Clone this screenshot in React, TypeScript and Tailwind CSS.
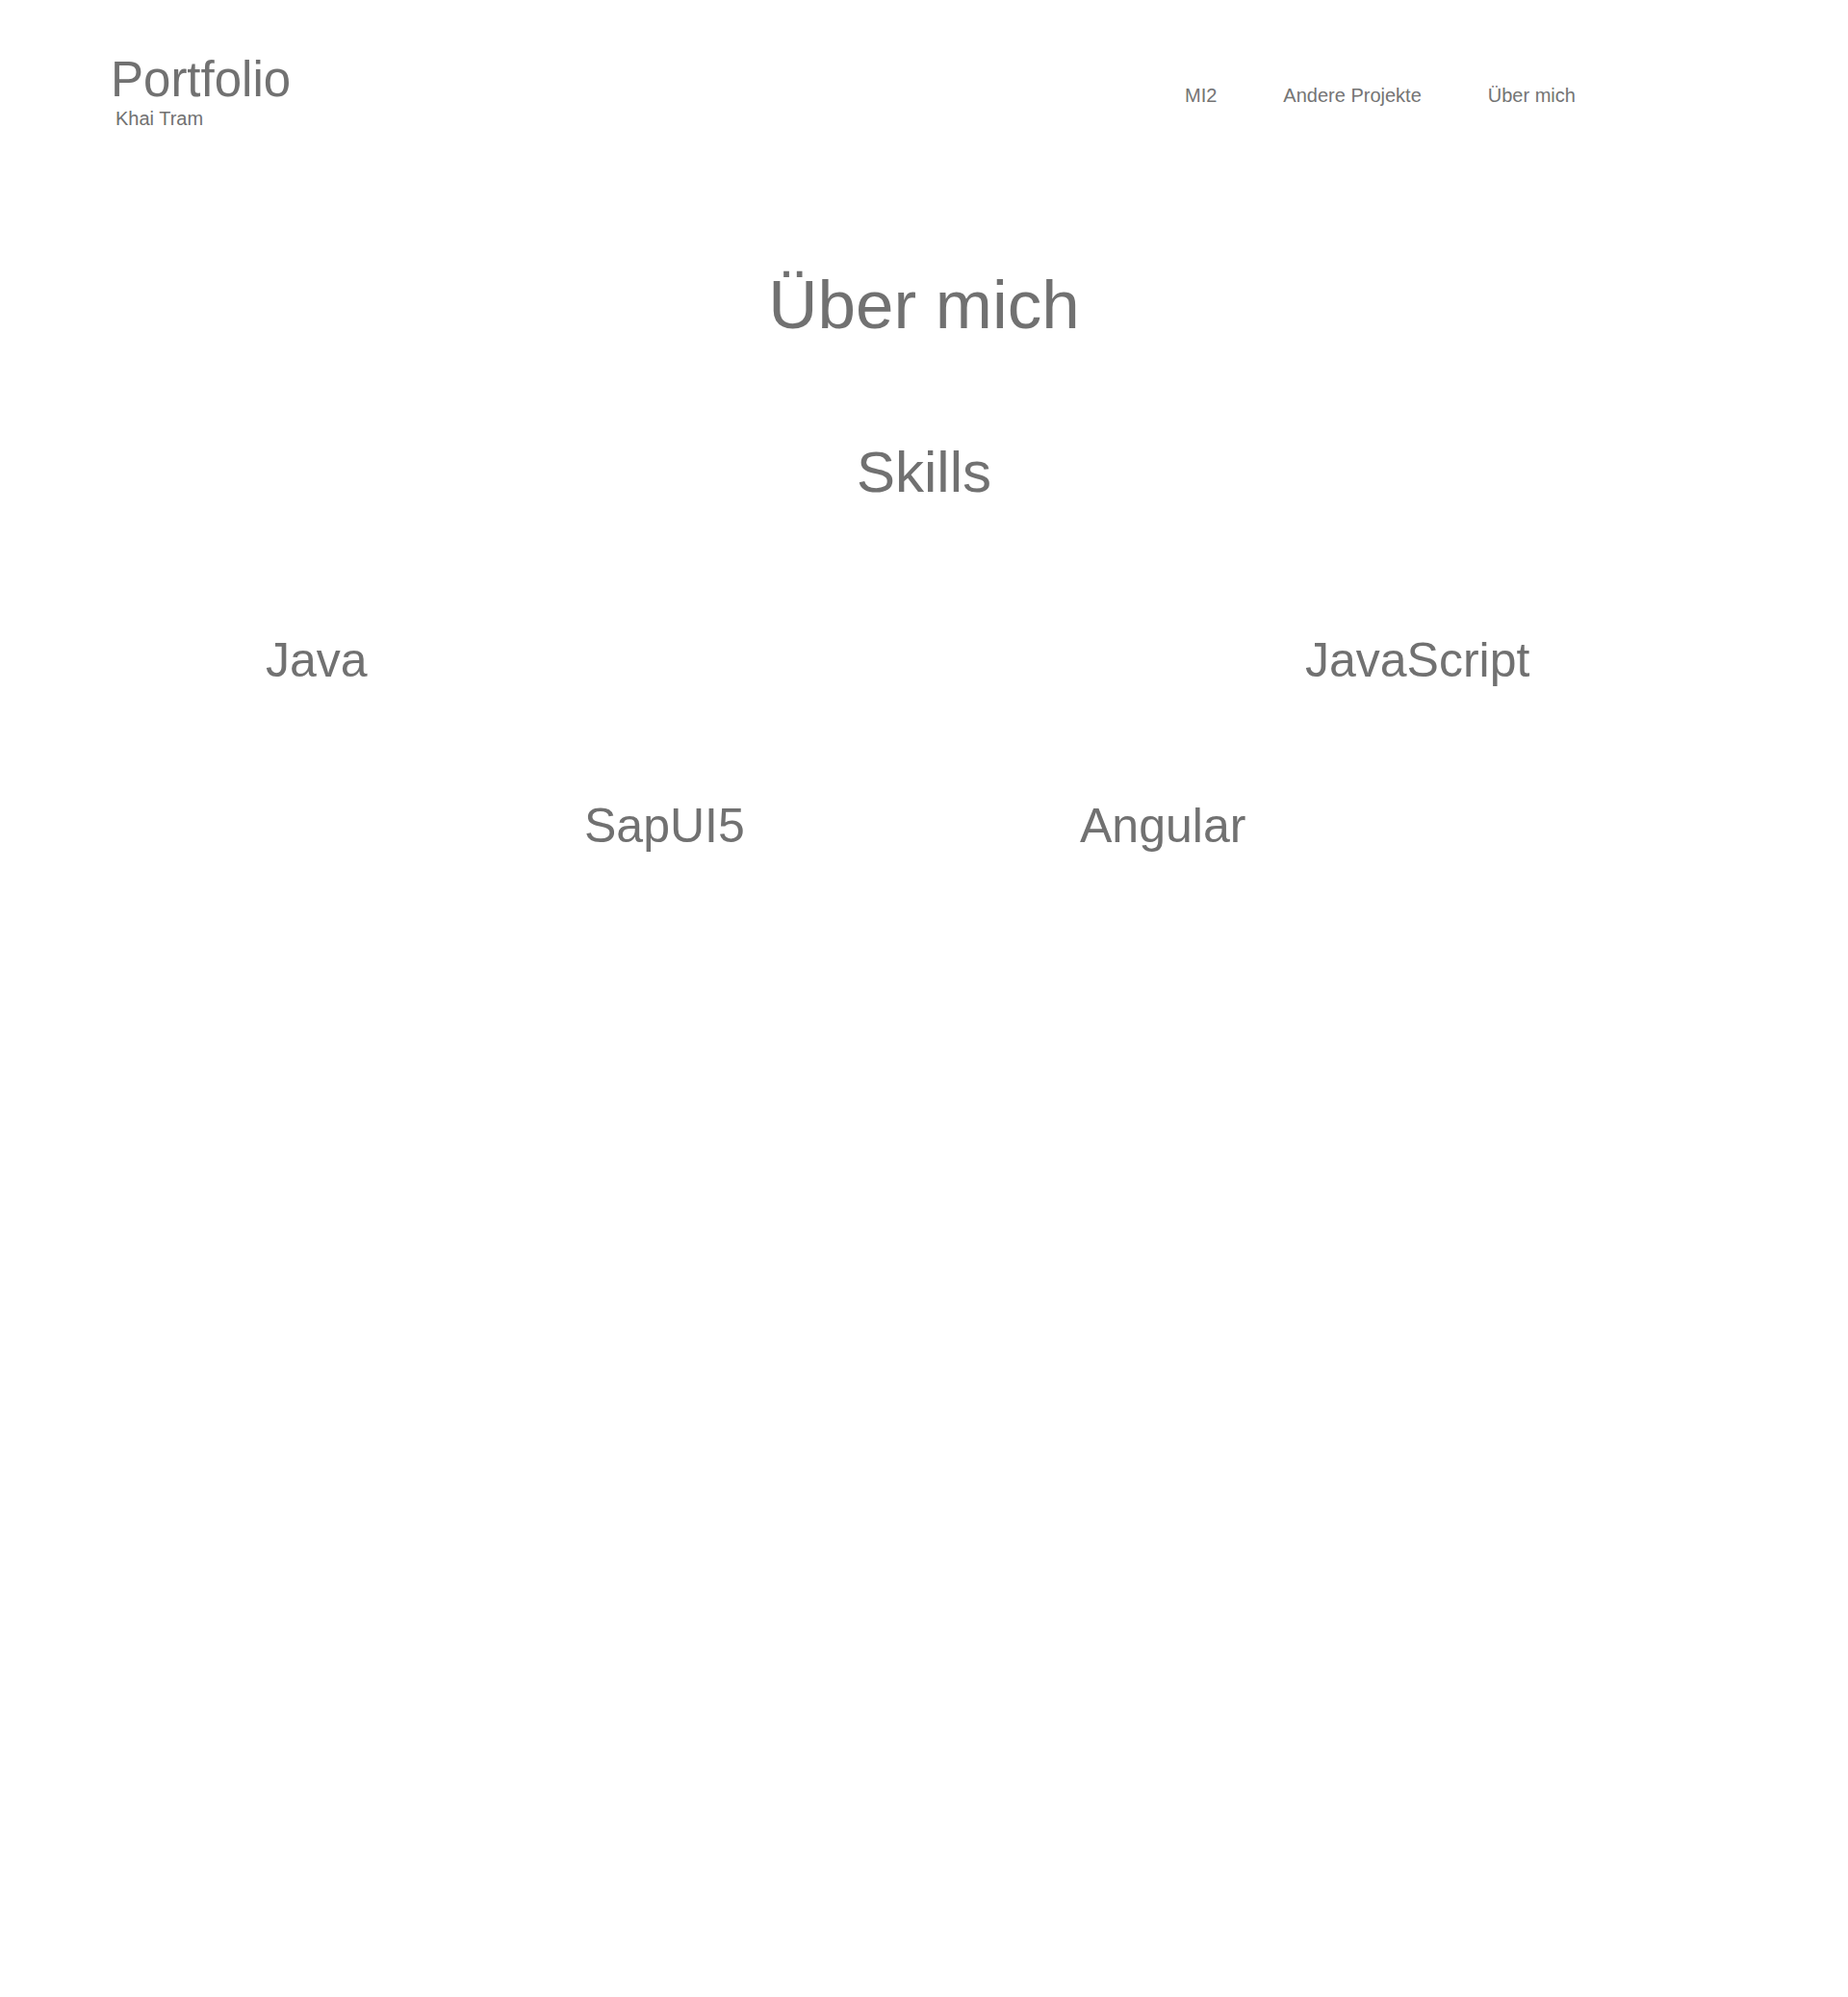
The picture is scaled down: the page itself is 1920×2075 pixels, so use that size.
import React from 'react';

const font = { fontFamily: '"Liberation Sans", Arial, Helvetica, sans-serif' };

const App = () => {
  const navItems = ['MI2', 'Andere Projekte', 'Über mich'];

  return (
    <div className="min-h-screen bg-white text-[#717171]" style={font}>
      <header className="flex items-start pl-[115px] pt-[57px]">
        <div className="w-[1116px]">
          <div className="text-[51px] leading-none">Portfolio</div>
          <div className="ml-[5px] mt-[5px] text-[20px] leading-none">Khai Tram</div>
        </div>
        <nav className="flex gap-[69px] pt-[32px] text-[20px] leading-none text-[#747474]">
          {navItems.map((item) => (
            <a key={item} href="#" className="hover:text-gray-900">
              {item}
            </a>
          ))}
        </nav>
      </header>

      <main>
        <h1 className="mt-[148px] text-center text-[71px] leading-none">Über mich</h1>

        <section className="mt-[109px]">
          <h2 className="text-center text-[60px] leading-none">Skills</h2>

          <div className="mt-[140px] flex pl-[276px] text-[50px] leading-none">
            <div className="w-[1080px]">Java</div>
            <div>JavaScript</div>
          </div>

          <div className="mt-[122px] flex pl-[607px] text-[50px] leading-none">
            <div className="w-[515px]">SapUI5</div>
            <div>Angular</div>
          </div>
        </section>
      </main>
    </div>
  );
};

export default App;
